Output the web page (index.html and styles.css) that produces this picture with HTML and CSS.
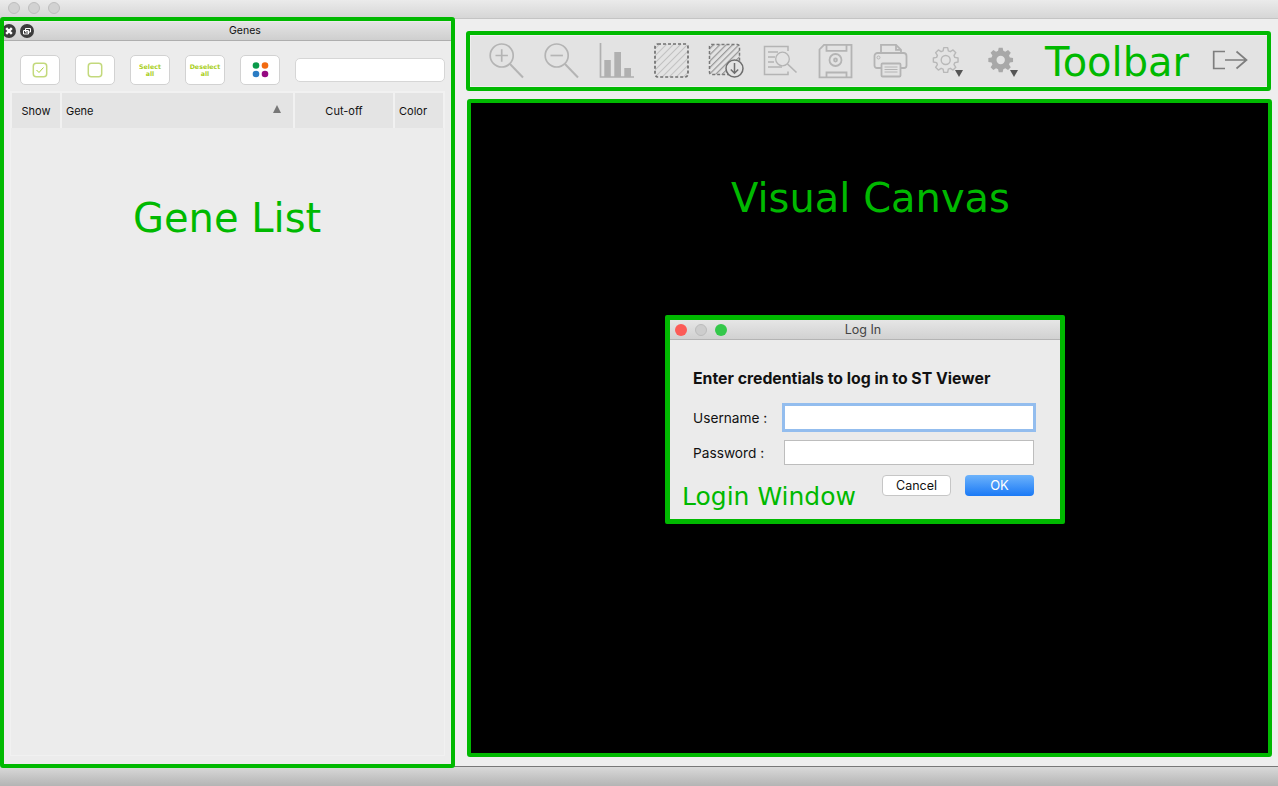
FILE: index.html
```html
<!DOCTYPE html>
<html lang="en">
<head>
<meta charset="utf-8">
<title>ST Viewer</title>
<link rel="stylesheet" href="styles.css">
</head>
<body>
<div class="app">
  <header class="topbar">
    <span class="light"></span><span class="light"></span><span class="light"></span>
  </header>
  <main class="main">
    <section class="gene-panel">
      <div class="dock-title">
        <span class="dock-btn dock-close">
          <svg viewBox="0 0 14 14" width="14" height="14"><path d="M4.200 4.200l5.600 5.600M9.800 4.200l-5.600 5.600" stroke="#fff" stroke-width="2.400" fill="none"/></svg>
        </span>
        <span class="dock-btn dock-float">
          <svg viewBox="0 0 14 14" width="14" height="14"><path d="M5.500 4.500h5v3.500h-5zM3.500 6.500h5v3.500h-5z" stroke="#fff" stroke-width="1" fill="#3c3c3c"/></svg>
        </span>
        <span class="dock-label">Genes</span>
      </div>
      <div class="gene-tools">
        <button class="tool-btn">
          <svg viewBox="0 0 16 16" width="16" height="16"><rect x="1.300" y="1.300" width="13.400" height="13.400" rx="3" fill="none" stroke="#c3d97c" stroke-width="1.500"/><path d="M4.500 8l2.500 2.500 4.500-5" fill="none" stroke="#a9cf3a" stroke-width="1"/></svg>
        </button>
        <button class="tool-btn">
          <svg viewBox="0 0 16 16" width="16" height="16"><rect x="1.300" y="1.300" width="13.400" height="13.400" rx="3" fill="none" stroke="#c3d97c" stroke-width="1.500"/></svg>
        </button>
        <button class="tool-btn tool-text">Select<br>all</button>
        <button class="tool-btn tool-text">Deselect<br>all</button>
        <button class="tool-btn">
          <svg viewBox="0 0 18 18" width="18" height="18"><circle cx="5" cy="4.500" r="3.300" fill="#0a9a4a"/><circle cx="14" cy="4.500" r="3.300" fill="#f26a10"/><circle cx="5" cy="13" r="3.300" fill="#2a7cc4"/><circle cx="14" cy="13" r="3.300" fill="#960a82"/></svg>
        </button>
        <input class="search" type="text" aria-label="Search genes">
      </div>
      <div class="gene-table">
        <div class="thead">
          <div class="th th-show">Show</div>
          <div class="th th-gene">Gene<span class="sort"></span></div>
          <div class="th th-cut">Cut-off</div>
          <div class="th th-color">Color</div>
        </div>
      </div>
    </section>

    <section class="workspace">
      <nav class="toolbar">
        <svg class="ico" viewBox="0 0 36 36"><g fill="none" stroke="#b4b4b4" stroke-width="1.700"><circle cx="13.700" cy="12.500" r="11.500"/><path d="M22 21l13 13.500" stroke-width="2"/><path d="M7.500 12.500h12.400M13.700 6.300v12.400"/></g></svg>
        <svg class="ico" viewBox="0 0 36 36"><g fill="none" stroke="#b4b4b4" stroke-width="1.700"><circle cx="13.700" cy="12.500" r="11.500"/><path d="M22 21l13 13.500" stroke-width="2"/><path d="M7.500 12.500h12.400"/></g></svg>
        <svg class="ico" viewBox="0 0 36 36"><path d="M2.500 0v34h33.500" fill="none" stroke="#b0b0b0" stroke-width="1.700"/><g fill="#b0b0b0"><rect x="6.300" y="17" width="6.500" height="17"/><rect x="16.300" y="9" width="6.700" height="25"/><rect x="26.300" y="25" width="6.700" height="9"/></g></svg>
        <svg class="ico" viewBox="0 0 36 36"><defs><pattern id="hatch" width="5" height="5" patternUnits="userSpaceOnUse" patternTransform="rotate(45)"><rect width="1" height="5" fill="#c2c2c2"/></pattern><pattern id="hatch2" width="4.500" height="4.500" patternUnits="userSpaceOnUse" patternTransform="rotate(45)"><rect width="1.200" height="4.500" fill="#969696"/></pattern></defs><rect x="2" y="1" width="33" height="33" rx="3" fill="url(#hatch)" stroke="#707070" stroke-width="1.700" stroke-dasharray="3 2"/></svg>
        <svg class="ico" viewBox="0 0 36 36"><rect x="1.500" y="1.500" width="30" height="30" rx="2" fill="url(#hatch2)" stroke="#787878" stroke-width="1.500" stroke-dasharray="3 2"/><circle cx="26.500" cy="25.500" r="8.500" fill="#e3e3e3" stroke="#6e6e6e" stroke-width="1.500"/><path d="M26.500 20v10M22.800 26.500l3.700 3.700 3.700-3.700" fill="none" stroke="#6e6e6e" stroke-width="1.500"/></svg>
        <svg class="ico" viewBox="0 0 36 36"><g fill="none" stroke="#b4b4b4" stroke-width="1.500"><path d="M25 8V3.500H1.500v28H25v-3"/><path d="M5 9h10M5 14h7M5 19h6M5 24h14"/><circle cx="19.500" cy="16" r="6.800" stroke-width="1.300"/><path d="M24.500 21l9 8.500" stroke-width="1.700"/></g></svg>
        <svg class="ico" viewBox="0 0 36 36"><g fill="none" stroke="#b4b4b4" stroke-width="1.800"><path d="M6 1.800h27.500v32.500H1.500V6.500z"/><path d="M8.500 1.800v6h20v-6"/><circle cx="17.500" cy="17" r="6"/><circle cx="17.500" cy="17" r="1.500"/><path d="M8.500 34.300v-4.800h20v4.800"/></g></svg>
        <svg class="ico" viewBox="0 0 36 36"><g fill="none" stroke="#b4b4b4" stroke-width="1.800"><path d="M8 10V1.800h15l5 5V10"/><path d="M23 1.800v5h5"/><path d="M8 25H4a2.500 2.500 0 0 1-2.500-2.500V13A3 3 0 0 1 4.500 10h26a3 3 0 0 1 3 3v9.500A2.500 2.500 0 0 1 31 25h-3"/><rect x="8.500" y="20.500" width="19" height="13" rx="1"/><path d="M11.500 24h13M11.500 26.500h13M11.500 29h13" stroke-width="1"/><circle cx="5.500" cy="14.500" r="1.500" stroke-width="1"/></g></svg>
        <svg class="ico" viewBox="0 0 36 36"><g transform="translate(17.700 17)" fill="none" stroke="#b8b8b8" stroke-width="1.400"><path d="M9.130-2.620L12.350-1.960 12.350 1.960 9.130 2.620 8.310 4.610 10.110 7.350 7.350 10.110 4.610 8.310 2.620 9.130 1.960 12.350-1.960 12.350-2.620 9.130-4.610 8.310-7.350 10.110-10.110 7.350-8.310 4.610-9.130 2.620-12.350 1.960-12.350-1.960-9.130-2.620-8.310-4.610-10.110-7.350-7.350-10.110-4.610-8.310-2.620-9.130-1.960-12.350 1.960-12.350 2.620-9.130 4.610-8.310 7.350-10.110 10.110-7.350 8.310-4.610z" stroke-linejoin="round"/><circle r="4.500"/></g><path d="M27 27h8l-4 7z" fill="#555"/></svg>
        <svg class="ico" viewBox="0 0 36 36"><g transform="translate(17.700 17)"><path fill="#a8a8a8" fill-rule="evenodd" d="M9.130-2.620L12.350-1.960 12.350 1.960 9.130 2.620 8.310 4.610 10.110 7.350 7.350 10.110 4.610 8.310 2.620 9.130 1.960 12.350-1.960 12.350-2.620 9.130-4.610 8.310-7.350 10.110-10.110 7.350-8.310 4.610-9.130 2.620-12.350 1.960-12.350-1.960-9.130-2.620-8.310-4.610-10.110-7.350-7.350-10.110-4.610-8.310-2.620-9.130-1.960-12.350 1.960-12.350 2.620-9.130 4.610-8.310 7.350-10.110 10.110-7.350 8.310-4.610zM4.200 0A4.200 4.200 0 1 0-4.200 0 4.200 4.200 0 1 0 4.200 0z"/></g><path d="M27 27h8l-4 7z" fill="#555"/></svg>
        <svg class="ico ico-exit" viewBox="0 0 36 36"><g fill="none" stroke="#7e7e7e" stroke-width="1.700"><path d="M13 8.500H1.700v17H13"/><path d="M13 17h21.500M24.500 8.500l10 8.500-10 8.500"/></g></svg>
      </nav>
      <div class="canvas">
        <div class="login-frame">
          <div class="login">
            <div class="login-title">
              <span class="tl tl-red"></span><span class="tl tl-grey"></span><span class="tl tl-green"></span>
              <span class="login-label">Log In</span>
            </div>
            <div class="login-body">
              <h1 class="login-head">Enter credentials to log in to ST Viewer</h1>
              <div class="login-row"><label class="login-field">Username :</label><input class="login-input is-focus" type="text"></div>
              <div class="login-row"><label class="login-field">Password :</label><input class="login-input" type="password"></div>
              <div class="login-actions">
                <button class="btn btn-cancel">Cancel</button>
                <button class="btn btn-ok">OK</button>
              </div>
            </div>
            <span class="note note-login">Login Window</span>
          </div>
        </div>
      </div>
    </section>
  </main>
  <footer class="bottombar"></footer>
</div>

<div class="frame frame-gene"></div>
<div class="frame frame-toolbar"></div>
<div class="frame frame-canvas"></div>
<span class="note note-gene">Gene List</span>
<span class="note note-toolbar">Toolbar</span>
<span class="note note-canvas">Visual Canvas</span>
</body>
</html>
```

FILE: styles.css
```css
* { box-sizing: border-box; }
html, body { margin: 0; padding: 0; }
body {
  width: 1278px;
  height: 786px;
  overflow: hidden;
  position: relative;
  font-family: "Inter", "Liberation Sans", sans-serif;
  color: #111;
  background: #eeeeee;
}
.app { display: flex; flex-direction: column; height: 786px; }

.topbar {
  height: 19px;
  flex: none;
  display: flex;
  gap: 8px;
  padding: 2px 0 0 8px;
  background: linear-gradient(#ebebeb, #d6d6d6);
  border-bottom: 1px solid #c4c4c4;
}
.light {
  width: 12px;
  height: 12px;
  border-radius: 50%;
  background: #d2d2d2;
  border: 1px solid #bebebe;
}

.main { flex: 1; display: flex; min-height: 0; }

.gene-panel {
  width: 452px;
  flex: none;
  display: flex;
  flex-direction: column;
  padding-top: 3px;
  background: #ececec;
}
.dock-title {
  height: 19px;
  flex: none;
  display: flex;
  align-items: center;
  padding-left: 2px;
  background: linear-gradient(#e4e4e4, #cfcfcf);
  border-bottom: 1px solid #aeaeae;
  position: relative;
}
.dock-btn {
  width: 14px;
  height: 14px;
  border-radius: 50%;
  background: #3c3c3c;
  display: block;
  margin-right: 4px;
}
.dock-btn svg { display: block; }
.dock-label {
  position: absolute;
  left: 229px;
  top: 2px;
  font-size: 10.500px;
  line-height: 13px;
}
.gene-tools {
  display: flex;
  align-items: center;
  gap: 15px;
  padding: 14px 7px 7px 20px;
  height: 50px;
  flex: none;
}
.tool-btn {
  width: 40px;
  height: 30px;
  flex: none;
  padding: 0;
  background: #fff;
  border: 1px solid #d2d2d2;
  border-radius: 5px;
  display: flex;
  align-items: center;
  justify-content: center;
  text-align: center;
}
.tool-text {
  font-family: "DejaVu Sans", sans-serif;
  font-weight: 700;
  font-size: 6.300px;
  line-height: 7px;
  color: #a9cf1e;
}
.search {
  width: 150px;
  height: 24px;
  background: #fff;
  border: 1px solid #d6d6d6;
  border-radius: 5px;
}
.gene-table {
  flex: 1;
  margin: 0 7px 11px 10px;
  border: 1px solid #f1f1f1;
}
.thead { display: flex; gap: 2px; height: 36px; padding: 1px 1px 0; background: #f1f1f1; }
.th {
  background: #e4e4e4;
  font-size: 11px;
  display: flex;
  align-items: center;
  justify-content: center;
  position: relative;
}
.th-show { width: 48px; }
.th-gene { width: 231px; justify-content: flex-start; padding-left: 4px; }
.th-cut { width: 98px; }
.th-color { width: 48px; justify-content: flex-start; padding-left: 4px; }
.sort {
  position: absolute;
  left: 211px;
  top: 12px;
  width: 0;
  height: 0;
  border-left: 4.500px solid transparent;
  border-right: 4.500px solid transparent;
  border-bottom: 8px solid #777;
}

.workspace {
  flex: 1;
  display: flex;
  flex-direction: column;
  gap: 17px;
  padding: 17px 10px 13px 19px;
  border-bottom: 1px solid #777;
}
.toolbar {
  height: 50px;
  flex: none;
  display: flex;
  align-items: center;
  gap: 19px;
  padding: 0 20px 0 17px;
  background: #e3e3e3;
}
.ico { width: 36px; height: 36px; flex: none; display: block; }
.ico-exit { margin-left: auto; }
.canvas { flex: 1; background: #000; position: relative; }

.login-frame {
  position: absolute;
  left: 194px;
  top: 212px;
  width: 400px;
  height: 209px;
  border: 5px solid #00b900;
  border-radius: 2px;
}
.login { height: 100%; background: #ebebeb; position: relative; }
.login-title {
  height: 20px;
  display: flex;
  align-items: center;
  gap: 8px;
  padding-left: 5px;
  background: linear-gradient(#e6e6e6, #d1d1d1);
  border-bottom: 1px solid #b4b4b4;
  position: relative;
}
.tl { width: 12px; height: 12px; border-radius: 50%; display: block; }
.tl-red { background: #fc5b57; }
.tl-grey { background: #cdcdcd; border: 1px solid #bcbcbc; }
.tl-green { background: #34c84a; }
.login-label {
  position: absolute;
  left: 0;
  right: 4px;
  top: 3px;
  text-align: center;
  font-size: 12.500px;
  line-height: 14px;
  color: #444;
}
.login-body { padding: 29px 26px 0 23px; }
.login-head {
  margin: 0 0 17px;
  font-size: 15.800px;
  line-height: 19px;
  font-weight: 700;
  color: #111;
}
.login-row {
  display: flex;
  align-items: center;
  justify-content: space-between;
  height: 25px;
  margin-bottom: 10px;
}
.login-field { font-size: 13.700px; line-height: 16px; }
.login-input {
  width: 250px;
  height: 25px;
  background: #fff;
  border: 1px solid #bdbdbd;
  border-radius: 0;
  padding: 0;
}
.is-focus { border-color: #a9a9a9; outline: 3px solid #93bdee; outline-offset: -1px; }
.login-actions { display: flex; justify-content: flex-end; gap: 14px; }
.btn {
  width: 69px;
  height: 21px;
  padding: 0;
  border-radius: 4px;
  font-family: inherit;
  font-size: 12.500px;
  line-height: 19px;
}
.btn-cancel { background: #fff; border: 1px solid #c6c6c6; color: #111; }
.btn-ok {
  background: linear-gradient(#6db3fb, #1a79f6);
  border: 0;
  color: #fff;
  font-size: 13px;
}

.bottombar {
  height: 19px;
  flex: none;
  background: linear-gradient(#d9d9d9, #b4b4b4);
}

.frame { position: absolute; border: 4.500px solid #00b900; border-radius: 3px; pointer-events: none; }
.frame-gene { left: 0; top: 17px; width: 455px; height: 751px; }
.frame-toolbar { left: 466px; top: 31px; width: 805px; height: 60px; }
.frame-canvas { left: 467px; top: 99px; width: 805px; height: 658px; }

.note {
  position: absolute;
  font-family: "DejaVu Sans", sans-serif;
  color: #00b900;
  white-space: nowrap;
}
.note-gene { left: 133px; top: 192px; font-size: 40px; line-height: 52px; }
.note-toolbar { left: 1045px; top: 36px; font-size: 40px; line-height: 52px; }
.note-canvas { left: 731px; top: 172px; font-size: 40px; line-height: 52px; }
.note-login { left: 12px; top: 161px; font-size: 25px; line-height: 32px; }
```
